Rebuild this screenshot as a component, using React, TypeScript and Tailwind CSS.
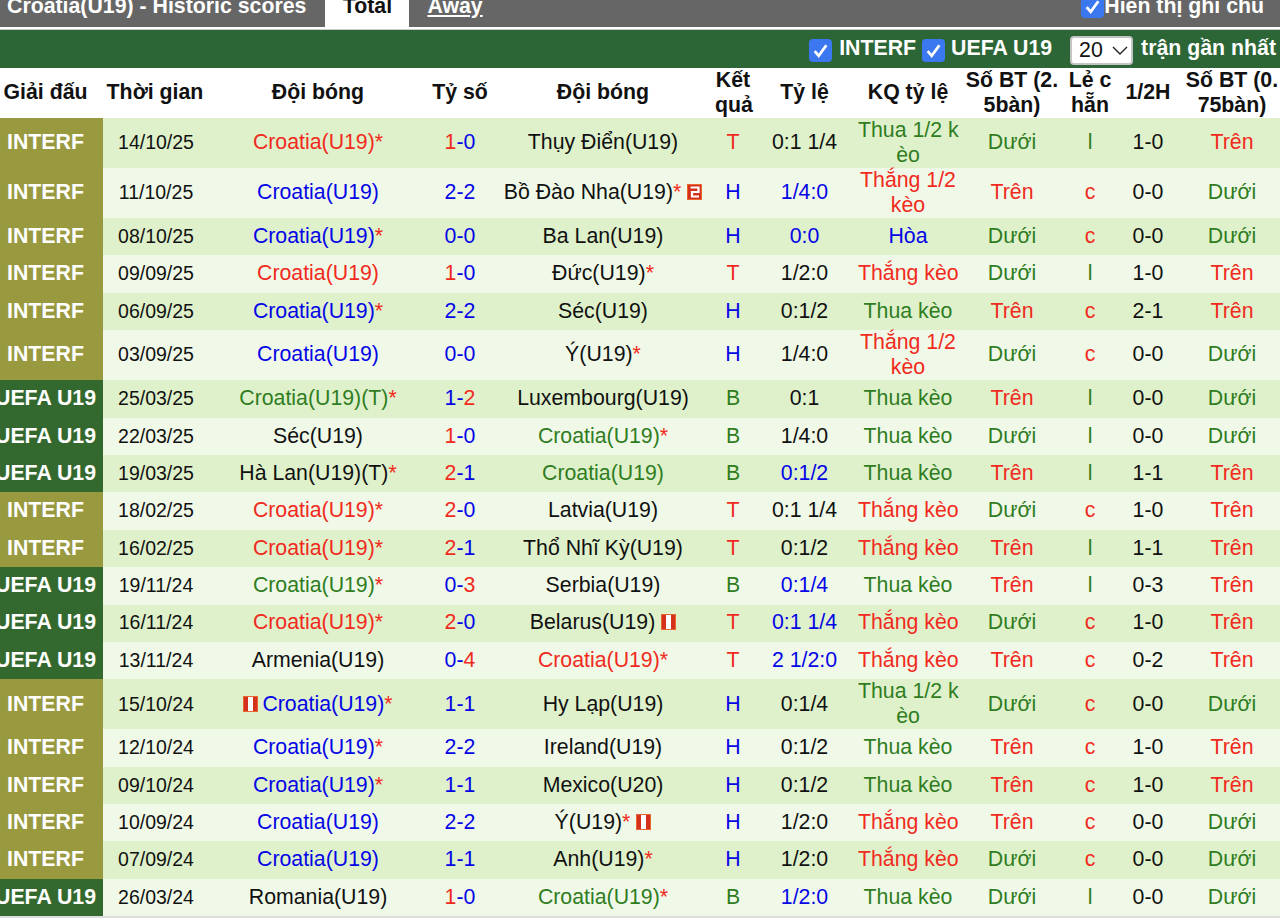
type Color = "k" | "r" | "b" | "g";
type Team = { name: string; color: Color; star?: boolean; card?: "red" | "two"; cardLeft?: boolean };
type Match = {
  league: "INTERF" | "UEFA U19";
  date: string;
  home: Team;
  score: [string, string];
  away: Team;
  result: "T" | "H" | "B";
  odds: string;
  oddsBlue?: boolean;
  oddsResult: string;
  goals: "Dưới" | "Trên";
  parity: "l" | "c";
  half: string;
  last: "Dưới" | "Trên";
};

const colors: Record<Color, string> = {
  k: "text-[#111]",
  r: "text-[#f12a20]",
  b: "text-[#0505e6]",
  g: "text-[#2f7d1f]",
};

const cro = (color: Color, star = false, name = "Croatia(U19)"): Team => ({ name, color, star });
const opp = (name: string, star = false): Team => ({ name, color: "k", star });

const THUA = "Thua kèo";
const THANG = "Thắng kèo";
const THUA_HALF = "Thua 1/2 k\nèo";
const THANG_HALF = "Thắng 1/2\nkèo";

const matches: Match[] = [
  { league: "INTERF", date: "14/10/25", home: cro("r", true), score: ["1", "0"], away: opp("Thụy Điển(U19)"), result: "T", odds: "0:1 1/4", oddsResult: THUA_HALF, goals: "Dưới", parity: "l", half: "1-0", last: "Trên" },
  { league: "INTERF", date: "11/10/25", home: cro("b"), score: ["2", "2"], away: { ...opp("Bồ Đào Nha(U19)", true), card: "two" }, result: "H", odds: "1/4:0", oddsBlue: true, oddsResult: THANG_HALF, goals: "Trên", parity: "c", half: "0-0", last: "Dưới" },
  { league: "INTERF", date: "08/10/25", home: cro("b", true), score: ["0", "0"], away: opp("Ba Lan(U19)"), result: "H", odds: "0:0", oddsBlue: true, oddsResult: "Hòa", goals: "Dưới", parity: "c", half: "0-0", last: "Dưới" },
  { league: "INTERF", date: "09/09/25", home: cro("r"), score: ["1", "0"], away: opp("Đức(U19)", true), result: "T", odds: "1/2:0", oddsResult: THANG, goals: "Dưới", parity: "l", half: "1-0", last: "Trên" },
  { league: "INTERF", date: "06/09/25", home: cro("b", true), score: ["2", "2"], away: opp("Séc(U19)"), result: "H", odds: "0:1/2", oddsResult: THUA, goals: "Trên", parity: "c", half: "2-1", last: "Trên" },
  { league: "INTERF", date: "03/09/25", home: cro("b"), score: ["0", "0"], away: opp("Ý(U19)", true), result: "H", odds: "1/4:0", oddsResult: THANG_HALF, goals: "Dưới", parity: "c", half: "0-0", last: "Dưới" },
  { league: "UEFA U19", date: "25/03/25", home: cro("g", true, "Croatia(U19)(T)"), score: ["1", "2"], away: opp("Luxembourg(U19)"), result: "B", odds: "0:1", oddsResult: THUA, goals: "Trên", parity: "l", half: "0-0", last: "Dưới" },
  { league: "UEFA U19", date: "22/03/25", home: opp("Séc(U19)"), score: ["1", "0"], away: cro("g", true), result: "B", odds: "1/4:0", oddsResult: THUA, goals: "Dưới", parity: "l", half: "0-0", last: "Dưới" },
  { league: "UEFA U19", date: "19/03/25", home: opp("Hà Lan(U19)(T)", true), score: ["2", "1"], away: cro("g"), result: "B", odds: "0:1/2", oddsBlue: true, oddsResult: THUA, goals: "Trên", parity: "l", half: "1-1", last: "Trên" },
  { league: "INTERF", date: "18/02/25", home: cro("r", true), score: ["2", "0"], away: opp("Latvia(U19)"), result: "T", odds: "0:1 1/4", oddsResult: THANG, goals: "Dưới", parity: "c", half: "1-0", last: "Trên" },
  { league: "INTERF", date: "16/02/25", home: cro("r", true), score: ["2", "1"], away: opp("Thổ Nhĩ Kỳ(U19)"), result: "T", odds: "0:1/2", oddsResult: THANG, goals: "Trên", parity: "l", half: "1-1", last: "Trên" },
  { league: "UEFA U19", date: "19/11/24", home: cro("g", true), score: ["0", "3"], away: opp("Serbia(U19)"), result: "B", odds: "0:1/4", oddsBlue: true, oddsResult: THUA, goals: "Trên", parity: "l", half: "0-3", last: "Trên" },
  { league: "UEFA U19", date: "16/11/24", home: cro("r", true), score: ["2", "0"], away: { ...opp("Belarus(U19)"), card: "red" }, result: "T", odds: "0:1 1/4", oddsBlue: true, oddsResult: THANG, goals: "Dưới", parity: "c", half: "1-0", last: "Trên" },
  { league: "UEFA U19", date: "13/11/24", home: opp("Armenia(U19)"), score: ["0", "4"], away: cro("r", true), result: "T", odds: "2 1/2:0", oddsBlue: true, oddsResult: THANG, goals: "Trên", parity: "c", half: "0-2", last: "Trên" },
  { league: "INTERF", date: "15/10/24", home: { ...cro("b", true), card: "red", cardLeft: true }, score: ["1", "1"], away: opp("Hy Lạp(U19)"), result: "H", odds: "0:1/4", oddsResult: THUA_HALF, goals: "Dưới", parity: "c", half: "0-0", last: "Dưới" },
  { league: "INTERF", date: "12/10/24", home: cro("b", true), score: ["2", "2"], away: opp("Ireland(U19)"), result: "H", odds: "0:1/2", oddsResult: THUA, goals: "Trên", parity: "c", half: "1-0", last: "Trên" },
  { league: "INTERF", date: "09/10/24", home: cro("b", true), score: ["1", "1"], away: opp("Mexico(U20)"), result: "H", odds: "0:1/2", oddsResult: THUA, goals: "Trên", parity: "c", half: "1-0", last: "Trên" },
  { league: "INTERF", date: "10/09/24", home: cro("b"), score: ["2", "2"], away: { ...opp("Ý(U19)", true), card: "red" }, result: "H", odds: "1/2:0", oddsResult: THANG, goals: "Trên", parity: "c", half: "0-0", last: "Dưới" },
  { league: "INTERF", date: "07/09/24", home: cro("b"), score: ["1", "1"], away: opp("Anh(U19)", true), result: "H", odds: "1/2:0", oddsResult: THANG, goals: "Dưới", parity: "c", half: "0-0", last: "Dưới" },
  { league: "UEFA U19", date: "26/03/24", home: opp("Romania(U19)"), score: ["1", "0"], away: cro("g", true), result: "B", odds: "1/2:0", oddsBlue: true, oddsResult: THUA, goals: "Dưới", parity: "l", half: "0-0", last: "Dưới" },
];

const headers = ["Giải đấu", "Thời gian", "Đội bóng", "Tỷ số", "Đội bóng", "Kết\nquả", "Tỷ lệ", "KQ tỷ lệ", "Số BT (2.\n5bàn)", "Lẻ c\nhẵn", "1/2H", "Số BT (0.\n75bàn)"];
const widths = ["w-[115px]", "w-[104px]", "w-[222px]", "w-[62px]", "w-[224px]", "w-[36px]", "w-[107px]", "w-[100px]", "w-[108px]", "w-[48px]", "w-[68px]", "w-[100px]"];

const resultColor = { T: "r", H: "b", B: "g" } as const;
const oddsResultColor = (text: string): Color => (text.startsWith("Thua") ? "g" : text === "Hòa" ? "b" : "r");

const Card = ({ kind, left }: { kind: "red" | "two"; left?: boolean }) => (
  <svg viewBox="0 0 15 16" className={`inline-block h-[16px] w-[15px] align-[-1px] ${left ? "mr-[4px]" : "ml-[6px]"}`}>
    <rect width="15" height="16" fill="#e8662f" />
    <rect x="1" y="1" width="13" height="14" fill="#d5301c" />
    {kind === "red" ? (
      <rect x="5" y="1" width="5" height="14" fill="#fff" />
    ) : (
      <path d="M3.5 3.5H11.5V8H5V12.5H12" fill="none" stroke="#fff" strokeWidth="2.2" />
    )}
  </svg>
);

const TeamCell = ({ team }: { team: Team }) => (
  <td className={`text-center ${colors[team.color]}`}>
    {team.card && team.cardLeft ? <Card kind={team.card} left /> : null}
    {team.name}
    {team.star ? <span className="text-[#f12a20]">*</span> : null}
    {team.card && !team.cardLeft ? <Card kind={team.card} /> : null}
  </td>
);

const Score = ({ score }: { score: [string, string] }) => {
  const [a, b] = score;
  return (
    <td className={`text-center ${colors.b}`}>
      <span className={Number(a) > Number(b) ? colors.r : ""}>{a}</span>-
      <span className={Number(b) > Number(a) ? colors.r : ""}>{b}</span>
    </td>
  );
};

const Tick = ({ className = "" }: { className?: string }) => (
  <span className={`flex h-[23px] w-[23px] shrink-0 items-center justify-center rounded-[4px] bg-[#3b78f0] ${className}`}>
    <svg viewBox="0 0 16 16" className="h-[17px] w-[17px]">
      <path d="M2.5 8.5L6.3 13L13.5 3" fill="none" stroke="#fff" strokeWidth="2.6" />
    </svg>
  </span>
);

const App = () => {
  return (
    <div className="min-h-[922px] overflow-hidden bg-white font-['Liberation_Sans',Arial,sans-serif] text-[21.3px] leading-[24.5px] text-[#111]">
      <div className="flex h-[27px] items-end overflow-hidden bg-[#666] font-bold text-white">
        <div className="pb-[9px] pl-[7px]">Croatia(U19) - Historic scores</div>
        <div className="ml-[19px] h-[27px] w-[84px] shrink-0 bg-white text-center text-[#111]">
          <div className="-mt-[6px]">Total</div>
        </div>
        <a className="ml-[18px] pb-[9px] underline">Away</a>
        <div className="ml-auto flex items-end pb-[9px] pr-[16px]">
          <Tick />
          Hiển thị ghi chú
        </div>
      </div>
      <div className="h-[3px] border-b border-[#ccc] bg-white" />

      <div className="flex h-[38px] items-center justify-end bg-[#2c6636] pb-[1px] pr-[4px] font-bold text-white">
        <Tick className="mt-[4px]" />
        <span className="ml-[7px]">INTERF</span>
        <Tick className="ml-[6px] mt-[4px]" />
        <span className="ml-[6px]">UEFA U19</span>
        <div className="ml-[18px] mt-[4px] flex h-[29px] w-[63px] items-center rounded-[4px] border-2 border-[#c4c4c4] bg-white pl-[7px] font-normal text-[#111]">
          20
          <svg viewBox="0 0 16 9" className="ml-[9px] h-[9px] w-[16px]">
            <path d="M1 1L8 8L15 1" fill="none" stroke="#222" strokeWidth="1.4" />
          </svg>
        </div>
        <span className="ml-[8px]">trận gần nhất</span>
      </div>

      <table className="-ml-[12px] w-[1294px] table-fixed border-collapse">
        <colgroup>
          {widths.map((width, index) => (
            <col key={index} className={width} />
          ))}
        </colgroup>
        <thead>
          <tr className="h-[50px]">
            {headers.map((header, index) => (
              <th key={index} className="whitespace-pre px-0 pb-[1px] pt-0 text-center font-bold">
                {header}
              </th>
            ))}
          </tr>
        </thead>
        <tbody className="[&_td]:whitespace-pre [&_td]:px-0 [&_td]:pb-[1px] [&_td]:pt-0">
          {matches.map((match, index) => (
            <tr key={match.date} className={`h-[37.4px] ${index % 2 === 0 ? "bg-[#dff1cb]" : "bg-[#f0f9e8]"}`}>
              <td className={`text-center font-bold text-white ${match.league === "INTERF" ? "bg-[#999940]" : "bg-[#33692e]"}`}>
                {match.league}
              </td>
              <td className="pl-[2px]! text-center text-[19.5px]">{match.date}</td>
              <TeamCell team={match.home} />
              <Score score={match.score} />
              <TeamCell team={match.away} />
              <td className={`text-center ${colors[resultColor[match.result]]}`}>{match.result}</td>
              <td className={`text-center ${match.oddsBlue ? colors.b : colors.k}`}>{match.odds}</td>
              <td className={`text-center ${colors[oddsResultColor(match.oddsResult)]}`}>{match.oddsResult}</td>
              <td className={`text-center ${match.goals === "Trên" ? colors.r : colors.g}`}>{match.goals}</td>
              <td className={`text-center ${match.parity === "c" ? colors.r : colors.g}`}>{match.parity}</td>
              <td className="text-center">{match.half}</td>
              <td className={`text-center ${match.last === "Trên" ? colors.r : colors.g}`}>{match.last}</td>
            </tr>
          ))}
        </tbody>
      </table>
      <div className="h-[2px] bg-[#ddd]" />
    </div>
  );
};

export default App;
